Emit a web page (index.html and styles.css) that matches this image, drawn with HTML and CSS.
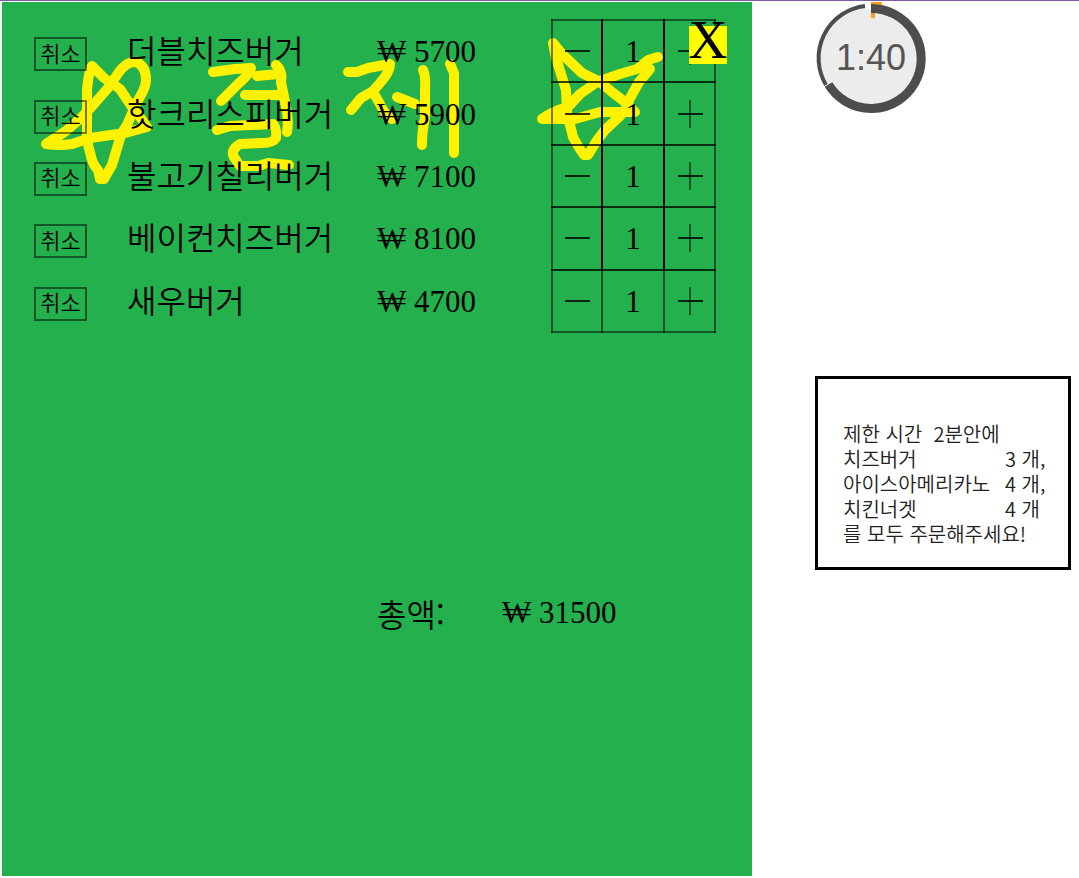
FILE: index.html
```html
<!DOCTYPE html>
<html lang="ko">
<head>
<meta charset="utf-8">
<meta name="viewport" content="width=device-width, initial-scale=1">
<title>결제</title>
<link rel="stylesheet" href="styles.css">
</head>
<body>
<main class="panel">
  <svg class="art" viewBox="2 2 750 200" role="img" aria-label="결제">
    <path d="M46 144L66 131L82 117L94 104L108 88L119 72Q127 61 136 62Q146 66 146 80Q146 88 137 102L127 125Q121 133 118 145L112 165L104 179H100L98 170Q92 164 90 152Q86 140 87 130V90Q89 70 92 66L104 78L120 89L132 107L140 117L147 127L125 133L90 138L72 144Q60 146 46 144Z"/>
    <path d="M213 72L235 69L251 68Q248 76 239 83L221 101M257 76L278 74M245 95H282M276 65Q283 71 281 82L286 107Q289 120 287 132"/>
    <path d="M217 130L230 126L273 124Q277 128 276 138Q273 143 262 143L240 144Q230 150 234 157L240 166H258L268 163L289 165"/>
    <path d="M348 72L357 72L368 68L390 64Q390 72 380 83L373 91L361 98L351 110M373 92L380 104Q384 114 392 119M397 97L415 104M423 70Q426 76 425 90V118Q422 130 422 145M450 64L454 73V153"/>
    <path d="M553 43L556 58L566 90L567 113L573 137Q580 150 584 155H588Q595 142 605 130L620 116Q627 110 629 100L639 82L650 69M553 43L563 55L582 73L600 82L612 92L625 102L635 112H600L575 119H542Q552 111 568 107L580 94L597 82L620 74L637 69L648 60L658 57"/>
  </svg>
  <table class="order">
    <colgroup><col class="col-cancel"><col class="col-name"><col class="col-price"><col class="col-minus"><col class="col-count"><col class="col-plus"></colgroup>
    <tbody>
      <tr><td><button class="cancel">취소</button></td><td class="name">더블치즈버거</td><td class="price">₩ 5700</td>
        <td class="qty minus"><button class="step" aria-label="감소"><svg viewBox="0 0 30 30"><path class="bar" d="M3 15H28"/></svg></button></td><td class="qty count">1</td><td class="qty"><button class="step" aria-label="증가"><svg viewBox="0 0 30 30"><path class="stem" d="M15 1V29"/><path class="bar" d="M3 15H28"/></svg></button></td></tr>
      <tr><td><button class="cancel">취소</button></td><td class="name">핫크리스피버거</td><td class="price">₩ 5900</td>
        <td class="qty minus"><button class="step" aria-label="감소"><svg viewBox="0 0 30 30"><path class="bar" d="M3 15H28"/></svg></button></td><td class="qty count">1</td><td class="qty"><button class="step" aria-label="증가"><svg viewBox="0 0 30 30"><path class="stem" d="M15 1V29"/><path class="bar" d="M3 15H28"/></svg></button></td></tr>
      <tr><td><button class="cancel">취소</button></td><td class="name">불고기칠리버거</td><td class="price">₩ 7100</td>
        <td class="qty minus"><button class="step" aria-label="감소"><svg viewBox="0 0 30 30"><path class="bar" d="M3 15H28"/></svg></button></td><td class="qty count">1</td><td class="qty"><button class="step" aria-label="증가"><svg viewBox="0 0 30 30"><path class="stem" d="M15 1V29"/><path class="bar" d="M3 15H28"/></svg></button></td></tr>
      <tr><td><button class="cancel">취소</button></td><td class="name">베이컨치즈버거</td><td class="price">₩ 8100</td>
        <td class="qty minus"><button class="step" aria-label="감소"><svg viewBox="0 0 30 30"><path class="bar" d="M3 15H28"/></svg></button></td><td class="qty count">1</td><td class="qty"><button class="step" aria-label="증가"><svg viewBox="0 0 30 30"><path class="stem" d="M15 1V29"/><path class="bar" d="M3 15H28"/></svg></button></td></tr>
      <tr><td><button class="cancel">취소</button></td><td class="name">새우버거</td><td class="price">₩ 4700</td>
        <td class="qty minus"><button class="step" aria-label="감소"><svg viewBox="0 0 30 30"><path class="bar" d="M3 15H28"/></svg></button></td><td class="qty count">1</td><td class="qty"><button class="step" aria-label="증가"><svg viewBox="0 0 30 30"><path class="stem" d="M15 1V29"/><path class="bar" d="M3 15H28"/></svg></button></td></tr>
    </tbody>
  </table>
  <div class="total"><span class="name total-label">총액:</span><span class="price">₩ 31500</span></div>
  <button class="close">X</button>
</main>
<aside class="side">
  <svg class="timer" viewBox="815 1 112 112" role="img" aria-label="1:40">
    <circle cx="871" cy="57" r="51" fill="#ececec"/>
    <path d="M866 2H871V8H866Z" fill="#fff"/>
    <path d="M871 1H882V5H871ZM871 8H875V17H871Z" fill="#ff9f1c"/>
    <path d="M865 5A52.5 52.5 0 0 0 826 84" fill="none" stroke="#4d4d4d" stroke-width="4"/>
    <path d="M871 7.500A50 50 0 1 1 828.500 83.500" fill="none" stroke="#4d4d4d" stroke-width="9"/>
    <text class="time" x="871" y="69" text-anchor="middle">1:40</text>
  </svg>
  <section class="note">
    <p class="line">제한 시간&nbsp; 2분안에</p>
    <p class="line"><span class="item">치즈버거</span><span>3 개,</span></p>
    <p class="line"><span class="item">아이스아메리카노</span><span>4 개,</span></p>
    <p class="line"><span class="item">치킨너겟</span><span>4 개</span></p>
    <p class="line">를 모두 주문해주세요!</p>
  </section>
</aside>
</body>
</html>
```
FILE: styles.css
```css
* { box-sizing: border-box; }

body {
  display: flex;
  min-height: 100vh;
  margin: 0;
  padding: 1px 0 2px 2px;
  border-top: 1px solid #7f5aa5;
  background: #fff;
  color: #000;
  font-family: "Liberation Serif", "Noto Sans CJK KR", serif;
}

button {
  padding: 0;
  border: 0;
  background: none;
  color: inherit;
  font-family: inherit;
  cursor: pointer;
}

.panel {
  position: relative;
  flex: 1;
  padding: 17px 32px;
  background: #24b14d;
}

.art {
  position: absolute;
  top: 0;
  left: 0;
  width: 750px;
  height: 200px;
  fill: none;
  stroke: #fff200;
  stroke-width: 10px;
  stroke-linecap: round;
  stroke-linejoin: round;
}

.order {
  position: relative;
  width: 682px;
  height: 314px;
  table-layout: fixed;
  border-collapse: collapse;
}

.col-cancel { width: 93px; }
.col-name { width: 250px; }
.col-price { width: 175px; }
.col-minus { width: 50px; }
.col-count { width: 62px; }
.col-plus { width: 51px; }

.order td { padding: 0; }

.cancel {
  display: block;
  width: 53px;
  height: 34px;
  margin-top: 6px;
  padding-bottom: 5px;
  border: 2px solid rgba(0, 0, 0, 0.5);
  font-size: 22px;
  line-height: 24px;
  font-weight: 350;
  font-family: "Noto Sans CJK KR", sans-serif;
}

.name {
  font-family: "Noto Sans CJK KR", sans-serif;
  font-size: 32px;
  line-height: 40px;
  font-weight: 350;
}

.order .name { padding-bottom: 4px; }

.price, .count {
  font-size: 31px;
  line-height: 40px;
}

.order .price, .order .count { padding-top: 2px; }

.order .qty {
  border: 2px solid rgba(0, 0, 0, 0.5);
  text-align: center;
}

.order tr:not(:last-child) .minus,
.order tr:not(:last-child) .count { border-right-color: #000; }

.order tr:not(:last-child) .qty { border-bottom-color: rgba(0, 0, 0, 0.75); }

.step {
  display: block;
  width: 100%;
  height: 40px;
}

.step svg {
  display: block;
  width: 30px;
  height: 30px;
  margin: auto;
  fill: none;
  stroke-width: 2px;
}

.bar { stroke: rgba(0, 0, 0, 0.8); }
.stem { stroke: rgba(0, 0, 0, 0.5); }

.total {
  display: flex;
  margin-top: 260px;
  padding-left: 343px;
}

.total-label { width: 125px; }

.close {
  display: flex;
  align-items: flex-start;
  justify-content: center;
  position: absolute;
  top: 24px;
  right: 25px;
  width: 38px;
  height: 38px;
  background: #ff0;
  font-size: 54px;
  line-height: 28px;
}

.side {
  width: 327px;
  padding: 0 8px 0 63px;
}

.timer {
  display: block;
  width: 112px;
  height: 112px;
}

.time {
  fill: #555;
  font-family: "Liberation Sans", sans-serif;
  font-size: 36px;
}

.note {
  margin-top: 262px;
  padding: 42px 0 21px 25px;
  border: 3px solid #000;
  color: #222;
  font-family: "Noto Sans CJK KR", sans-serif;
  font-size: 20px;
  line-height: 25px;
  font-weight: 350;
}

.line {
  display: flex;
  margin: 0;
}

.item { width: 162px; }
```
